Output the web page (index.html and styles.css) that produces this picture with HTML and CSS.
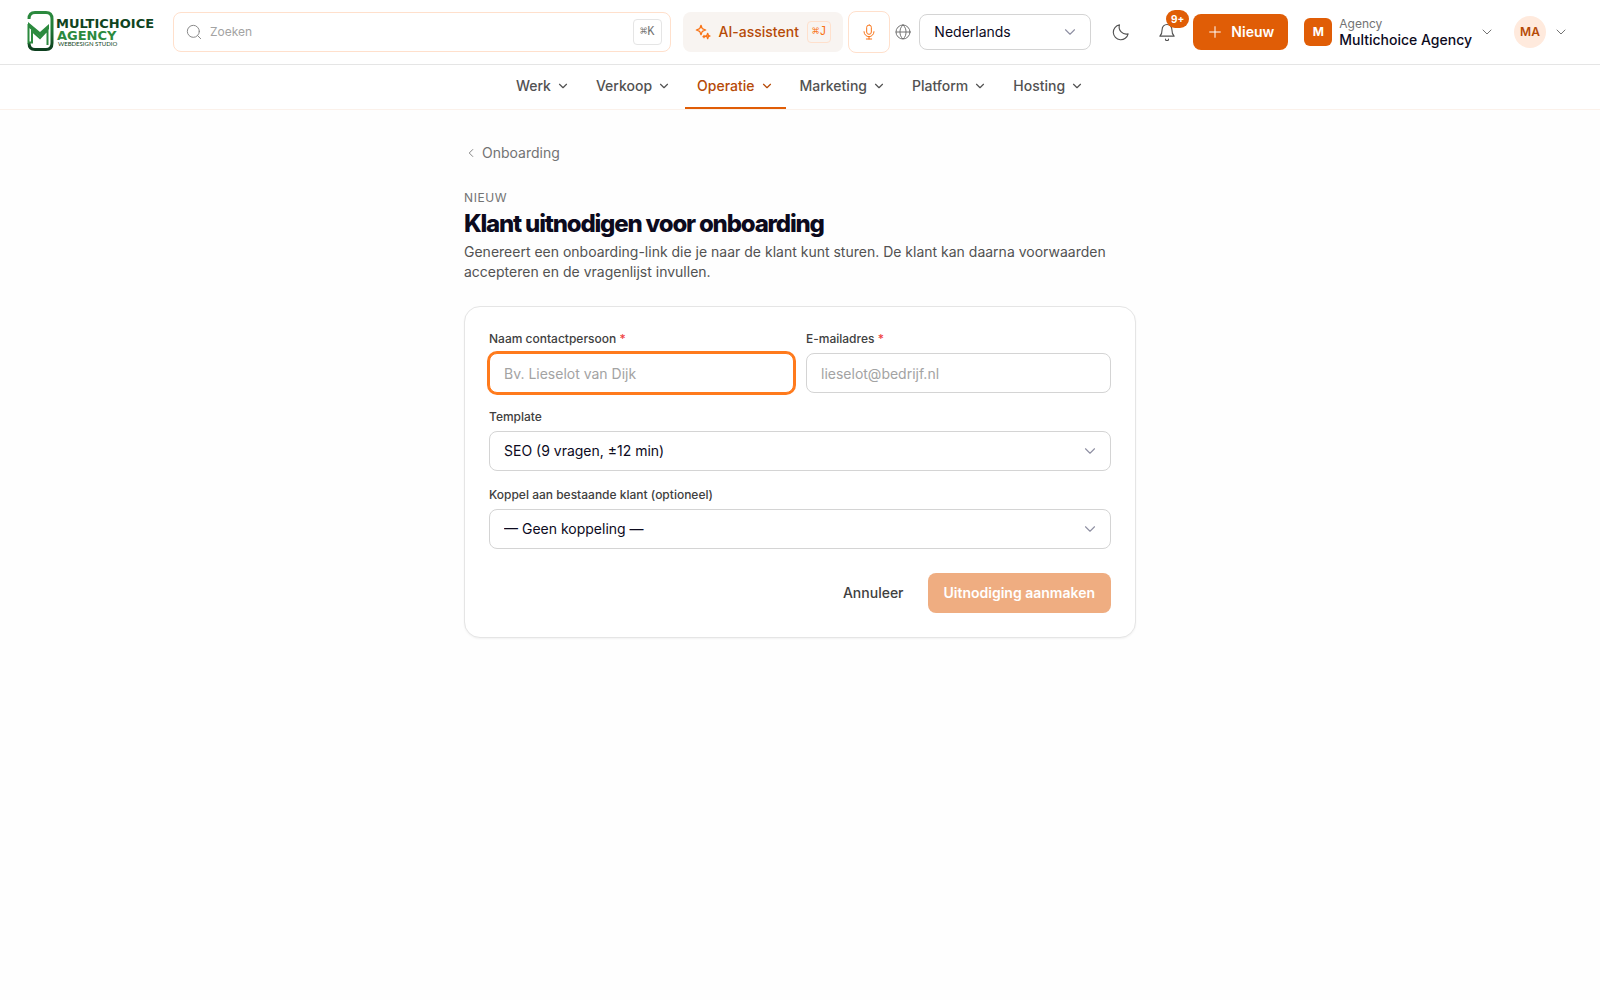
FILE: index.html
```html
<!DOCTYPE html>
<html lang="nl">
<head>
    <meta charset="UTF-8">
    <meta name="viewport" content="width=device-width, initial-scale=1.0">
    <title>Klant uitnodigen voor onboarding</title>
    <link rel="stylesheet" href="styles.css">
</head>
<body>

    <!-- Shared icon shapes -->
    <svg class="icon-defs" aria-hidden="true">
        <symbol id="chevron-down" viewBox="0 0 24 24"><path d="m6 9 6 6 6-6"/></symbol>
    </svg>

    <header class="topbar">
        <a class="logo" href="#" aria-label="Multichoice Agency">
            <svg width="130" height="42" viewBox="0 0 130 42">
                <defs>
                    <linearGradient id="logo-green" x1="0" y1="0" x2="0" y2="1">
                        <stop offset="0" stop-color="#2b8a3e"/>
                        <stop offset="0.45" stop-color="#1f7a35"/>
                        <stop offset="1" stop-color="#0d3f1f"/>
                    </linearGradient>
                </defs>
                <path d="M2 8Q2 1.500 8 1.500H19Q25 1.500 25 8V32Q25 38.500 19 38.500H8Q2 38.500 2 32" fill="none" stroke="url(#logo-green)" stroke-width="3"/>
                <path d="M1.500 13V31.500H5V20L13 27L20.500 19V34" fill="none" stroke="#2b8a3e" stroke-width="2"/>
                <path d="M1 11L13 21L22 13V18L13 26L1 16Z" fill="#2b8a3e"/>
                <text class="logo-name" x="29" y="17">MULTICHOICE</text>
                <text class="logo-name logo-name-light" x="30" y="29">AGENCY</text>
                <text class="logo-sub" x="31" y="35">WEBDESIGN STUDIO</text>
            </svg>
        </a>

        <label class="search">
            <svg class="icon" viewBox="0 0 24 24"><circle cx="11" cy="11" r="9"/><path d="m22 22-4.500-4.500"/></svg>
            <input type="search" placeholder="Zoeken" aria-label="Zoeken">
            <kbd class="kbd">⌘K</kbd>
        </label>

        <div class="assist">
            <button class="btn-ai" type="button">
                <svg class="icon icon-bold" viewBox="0 0 24 24"><path d="M9 2l1.600 4.200a2 2 0 0 0 1.200 1.200L16 9l-4.200 1.600a2 2 0 0 0-1.200 1.200L9 16l-1.600-4.200a2 2 0 0 0-1.200-1.200L2 9l4.200-1.600a2 2 0 0 0 1.200-1.200ZM19 14l1 3 2.500 1-2.500 1-1 3-1-3-2.500-1 2.500-1ZM13.500 17v3.500M12 19h3"/></svg>
                AI-assistent
                <kbd class="kbd kbd-orange">⌘J</kbd>
            </button>
            <button class="btn-mic" type="button" aria-label="Spraak">
                <svg class="icon" viewBox="0 0 24 24"><rect x="8.500" y="1.500" width="7" height="14" rx="3.500"/><path d="M4.500 11.500a7.500 7.500 0 0 0 15 0M12 19v3.500M8 22.500h8"/></svg>
            </button>
            <svg class="icon icon-globe" viewBox="0 0 24 24"><circle cx="12" cy="12" r="10.500"/><path d="M1.500 12h21M12 1.500c3.500 3 4.500 6.500 4.500 10.500s-1 7.500-4.500 10.500c-3.500-3-4.500-6.500-4.500-10.500s1-7.500 4.500-10.500Z"/></svg>
        </div>

        <div class="select-wrap select-lang">
            <select class="field" aria-label="Taal">
                <option>Nederlands</option>
            </select>
            <svg class="icon select-arrow"><use href="#chevron-down"/></svg>
        </div>

        <div class="tools">
            <button class="btn-icon" type="button" aria-label="Donkere modus">
                <svg class="icon" viewBox="0 0 24 24"><path d="M10 2.500a9.500 9.500 0 0 0 11.500 12A10 10 0 1 1 10 2.500Z"/></svg>
            </button>
            <button class="btn-icon" type="button" aria-label="Meldingen">
                <svg class="icon" viewBox="0 0 24 24"><path d="M10 21.500a2 2 0 0 0 4 0M2.500 17.500h19c-2-2-3-3.500-3-9a6.500 6.500 0 0 0-13 0c0 5.500-1 7-3 9Z"/></svg>
                <span class="badge">9+</span>
            </button>
            <button class="btn btn-primary btn-new" type="button">
                <svg class="icon" viewBox="0 0 24 24"><path d="M12 4v16M4 12h16"/></svg>
                Nieuw
            </button>
        </div>

        <button class="workspace" type="button">
            <span class="workspace-mark">M</span>
            <span class="workspace-text">
                <span class="workspace-kind">Agency</span>
                <span class="workspace-name">Multichoice Agency</span>
            </span>
            <svg class="icon"><use href="#chevron-down"/></svg>
        </button>

        <button class="account" type="button">
            <span class="avatar">MA</span>
            <svg class="icon"><use href="#chevron-down"/></svg>
        </button>
    </header>

    <nav class="mainnav">
        <a class="nav-item" href="#">Werk <svg class="icon icon-small"><use href="#chevron-down"/></svg></a>
        <a class="nav-item" href="#">Verkoop <svg class="icon icon-small"><use href="#chevron-down"/></svg></a>
        <a class="nav-item nav-active" href="#" aria-current="page">Operatie <svg class="icon icon-small"><use href="#chevron-down"/></svg></a>
        <a class="nav-item" href="#">Marketing <svg class="icon icon-small"><use href="#chevron-down"/></svg></a>
        <a class="nav-item" href="#">Platform <svg class="icon icon-small"><use href="#chevron-down"/></svg></a>
        <a class="nav-item" href="#">Hosting <svg class="icon icon-small"><use href="#chevron-down"/></svg></a>
    </nav>

    <main class="page">
        <a class="back" href="#">
            <svg class="icon icon-small" viewBox="0 0 24 24"><path d="m15 18-6-6 6-6"/></svg>
            Onboarding
        </a>

        <div class="page-head">
            <p class="eyebrow">Nieuw</p>
            <h1>Klant uitnodigen voor onboarding</h1>
            <p class="intro">Genereert een onboarding-link die je naar de klant kunt sturen. De klant kan daarna voorwaarden accepteren en de vragenlijst invullen.</p>
        </div>

        <form class="card">
            <div class="form-row">
                <div class="form-group">
                    <label for="name">Naam contactpersoon <span class="required">*</span></label>
                    <input class="field is-focused" type="text" id="name" placeholder="Bv. Lieselot van Dijk">
                </div>
                <div class="form-group">
                    <label for="email">E-mailadres <span class="required">*</span></label>
                    <input class="field" type="email" id="email" placeholder="lieselot@bedrijf.nl">
                </div>
            </div>
            <div class="form-group">
                <label for="template">Template</label>
                <div class="select-wrap">
                    <select class="field" id="template">
                        <option>SEO (9 vragen, ±12 min)</option>
                    </select>
                    <svg class="icon select-arrow"><use href="#chevron-down"/></svg>
                </div>
            </div>
            <div class="form-group">
                <label for="client">Koppel aan bestaande klant (optioneel)</label>
                <div class="select-wrap">
                    <select class="field" id="client">
                        <option>— Geen koppeling —</option>
                    </select>
                    <svg class="icon select-arrow"><use href="#chevron-down"/></svg>
                </div>
            </div>
            <div class="form-actions">
                <button class="btn btn-ghost" type="button">Annuleer</button>
                <button class="btn btn-primary" type="submit" disabled>Uitnodiging aanmaken</button>
            </div>
        </form>
    </main>

</body>
</html>
```

FILE: styles.css
```css
:root {
    --primary: #e05d06;
    --primary-dark: #b64a07;
    --accent: #f97316;
    --peach: #ffe0cc;
    --ink: #0c0a1d;
    --text: #404040;
    --text-soft: #525252;
    --muted: #737373;
    --placeholder: #a3a3a3;
    --border: #e5e5e5;
    --field-border: #d4d4d4;
}

* {
    box-sizing: border-box;
}

body {
    margin: 0;
    font-family: Inter, "Noto Sans", sans-serif;
    font-size: 14px;
    line-height: 20px;
    color: var(--ink);
    background-color: #fefefe;
}

button,
input,
select {
    font: inherit;
    color: inherit;
}

button {
    border: none;
    background: none;
    padding: 0;
    cursor: pointer;
}

a {
    color: inherit;
    text-decoration: none;
}

h1,
p {
    margin: 0;
}

.icon-defs {
    display: none;
}

.icon {
    width: 16px;
    height: 16px;
    flex-shrink: 0;
    fill: none;
    stroke: currentColor;
    stroke-width: 1.5;
    stroke-linecap: round;
    stroke-linejoin: round;
}

.icon-small {
    width: 14px;
    height: 14px;
}

.icon-bold {
    stroke-width: 2;
}

/* Top bar */
.topbar {
    display: flex;
    align-items: center;
    height: 65px;
    padding: 0 31px 0 27px;
    border-bottom: 1px solid var(--border);
    background-color: #fff;
}

.logo {
    display: flex;
    margin-right: 16px;
}

.logo-name {
    font-family: "DejaVu Sans", sans-serif;
    font-size: 13px;
    font-weight: 700;
    fill: #0f4421;
}

.logo-name-light {
    fill: #2b8a3e;
}

.logo-sub {
    font-family: Lato, sans-serif;
    font-size: 6px;
    font-weight: 400;
    fill: #0f4421;
}

.search {
    flex: 1;
    display: flex;
    align-items: center;
    gap: 8px;
    height: 40px;
    padding: 0 8px 0 12px;
    border: 1px solid var(--peach);
    border-radius: 8px;
    color: var(--placeholder);
}

.search .icon {
    color: #8a8a8a;
}

.search input {
    flex: 1;
    min-width: 0;
    padding: 0;
    border: none;
    outline: none;
    background: none;
    font-size: 12px;
}

.search input::placeholder,
.field::placeholder {
    color: var(--placeholder);
    opacity: 1;
}

.kbd {
    padding: 0 6px;
    border: 1px solid var(--border);
    border-radius: 4px;
    font-family: "Liberation Mono", "DejaVu Sans Mono", monospace;
    font-size: 12px;
    line-height: 24px;
    color: var(--muted);
}

.kbd-orange {
    padding: 0 4px;
    border-color: var(--peach);
    line-height: 20px;
    color: var(--accent);
}

.assist {
    display: flex;
    align-items: center;
    gap: 5px;
    margin: 0 8px 0 12px;
}

.btn-ai {
    display: flex;
    align-items: center;
    gap: 8px;
    height: 40px;
    padding: 0 12px;
    border-radius: 8px;
    background-color: #f8f4f1;
    font-weight: 500;
    color: var(--primary-dark);
}

.btn-ai .icon,
.btn-mic {
    color: var(--accent);
}

.btn-mic {
    display: grid;
    place-items: center;
    width: 42px;
    height: 42px;
    border: 1px solid var(--peach);
    border-radius: 8px;
}

.icon-globe {
    color: var(--muted);
}

.tools {
    display: flex;
    align-items: center;
    gap: 6px;
    margin: 0 16px 0 10px;
}

.btn-icon {
    position: relative;
    display: grid;
    place-items: center;
    width: 40px;
    height: 36px;
    color: var(--text-soft);
}

.btn-icon .icon {
    width: 18px;
    height: 18px;
}

.badge {
    position: absolute;
    top: -4px;
    right: -2px;
    padding: 0 5px;
    border-radius: 9px;
    background-color: var(--primary);
    font-size: 10px;
    font-weight: 700;
    line-height: 18px;
    color: #fff;
}

.btn {
    display: flex;
    align-items: center;
    gap: 8px;
    height: 40px;
    padding: 0 16px;
    border-radius: 8px;
    font-weight: 500;
}

.btn-primary {
    background-color: var(--primary);
    font-weight: 600;
    color: #fff;
}

.btn-primary:disabled {
    opacity: 0.5;
    cursor: default;
}

.btn-ghost {
    color: var(--text);
}

.btn-new {
    height: 36px;
    padding: 0 14px;
}

.workspace,
.account {
    display: flex;
    align-items: center;
    gap: 7px;
    color: var(--muted);
}

.workspace {
    margin-right: 19px;
}

.workspace-mark {
    width: 28px;
    border-radius: 6px;
    background-color: var(--primary);
    font-size: 12px;
    font-weight: 700;
    line-height: 28px;
    color: #fff;
}

.workspace-text {
    display: flex;
    flex-direction: column;
    text-align: left;
    line-height: 16px;
}

.workspace-kind {
    font-size: 12px;
}

.workspace-name {
    font-weight: 500;
    color: var(--ink);
}

.avatar {
    width: 32px;
    border-radius: 50%;
    background-color: #ffeadd;
    font-size: 12px;
    font-weight: 600;
    line-height: 32px;
    color: var(--primary-dark);
}

/* Main navigation */
.mainnav {
    display: flex;
    justify-content: center;
    gap: 2px;
    height: 45px;
    border-bottom: 1px solid #fbf1ea;
    background-color: #fff;
}

.nav-item {
    display: flex;
    align-items: center;
    gap: 5px;
    padding: 0 12px;
    border-bottom: 2px solid transparent;
    font-weight: 500;
    color: var(--text-soft);
}

.nav-item .icon {
    stroke-width: 2;
}

.nav-active {
    border-color: var(--primary);
    color: var(--primary-dark);
}

/* Page */
.page {
    max-width: 672px;
    margin: 0 auto;
    padding: 33px 0;
}

.back {
    display: inline-flex;
    align-items: center;
    gap: 4px;
    color: var(--muted);
}

.page-head {
    margin: 25px 0 24px;
}

.eyebrow {
    font-size: 12px;
    line-height: 16px;
    letter-spacing: 0.05em;
    text-transform: uppercase;
    color: var(--muted);
}

h1 {
    margin: 2px 0;
    font-size: 24px;
    font-weight: 800;
    line-height: 32px;
    letter-spacing: -0.05em;
}

.intro {
    color: var(--text-soft);
}

.card {
    display: flex;
    flex-direction: column;
    gap: 16px;
    padding: 24px;
    border: 1px solid var(--border);
    border-radius: 16px;
    background-color: #fff;
    box-shadow: 0 1px 2px rgba(0, 0, 0, 0.05);
}

.form-row {
    display: grid;
    grid-template-columns: 1fr 1fr;
    gap: 12px;
}

.form-group {
    display: flex;
    flex-direction: column;
    gap: 6px;
}

.form-group label {
    font-size: 12px;
    font-weight: 500;
    line-height: 16px;
    color: var(--text);
}

.required {
    color: #ef4444;
}

.field {
    width: 100%;
    height: 40px;
    padding: 0 14px;
    border: 1px solid var(--field-border);
    border-radius: 8px;
    background-color: #fff;
    appearance: none;
}

.field:focus,
.field.is-focused {
    border-color: #ff7a1c;
    outline: none;
    box-shadow: 0 0 0 2px #ff7a1c;
}

.select-wrap {
    position: relative;
}

.select-arrow {
    position: absolute;
    top: 50%;
    right: 12px;
    width: 18px;
    height: 18px;
    margin-top: -9px;
    color: #8f90a3;
    pointer-events: none;
}

.select-lang {
    width: 172px;
}

.select-lang .field {
    height: 36px;
    display: block;
}

.form-actions {
    display: flex;
    justify-content: flex-end;
    gap: 8px;
    padding-top: 8px;
}
```
